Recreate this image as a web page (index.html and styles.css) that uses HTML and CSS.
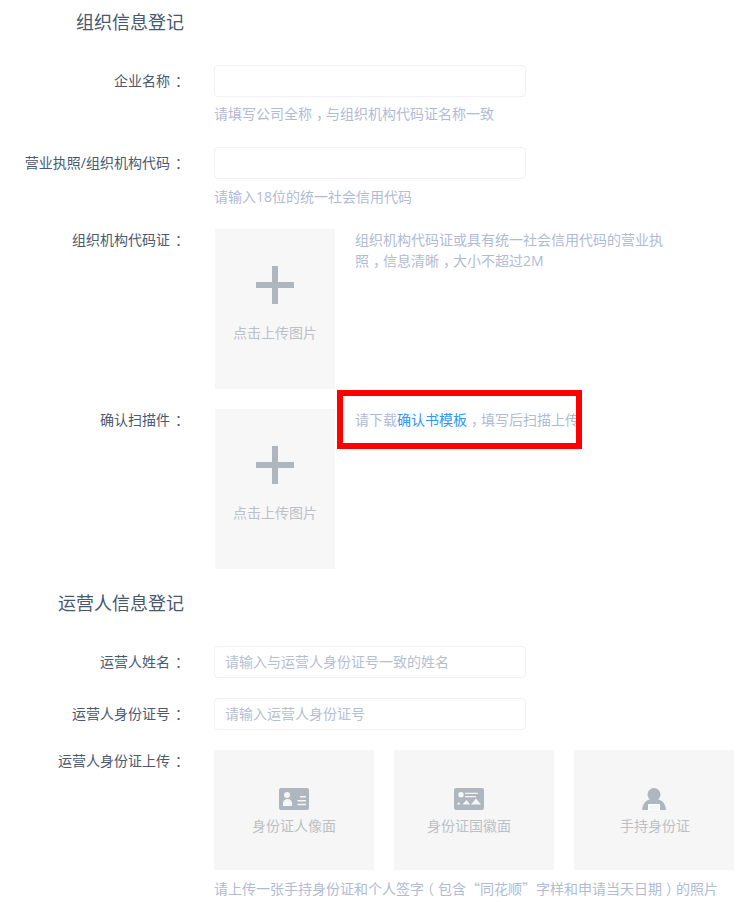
FILE: index.html
```html
<!DOCTYPE html>
<html lang="zh-CN">
<head>
<meta charset="utf-8">
<title>组织信息登记</title>
<link rel="stylesheet" href="styles.css">
</head>
<body>
<main class="form">
  <h2 class="title">组织信息登记</h2>
  <div class="row row-fixed">
    <label class="label">企业名称<span class="colon">：</span></label>
    <div class="field">
      <input class="input" type="text">
      <p class="hint hint-first">请填写公司全称<span class="comma">，</span>与组织机构代码证名称一致</p>
    </div>
  </div>
  <div class="row row-fixed">
    <label class="label">营业执照/组织机构代码<span class="colon">：</span></label>
    <div class="field">
      <input class="input" type="text">
      <p class="hint">请输入18位的统一社会信用代码</p>
    </div>
  </div>
  <div class="row row-upload">
    <label class="label">组织机构代码证<span class="colon">：</span></label>
    <div class="field field-side">
      <div class="upload upload-plus">
        <svg class="plus" width="38" height="38" viewBox="0 0 38 38"><path d="M16 0h6v16h16v6H22v16h-6V22H0v-6h16z"/></svg>
        <span>点击上传图片</span>
      </div>
      <div class="side-text">
        <p class="side-line">组织机构代码证或具有统一社会信用代码的营业执</p>
        <p class="side-line">照<span class="comma">，</span>信息清晰<span class="comma">，</span>大小不超过2M</p>
      </div>
    </div>
  </div>
  <div class="row row-upload">
    <label class="label">确认扫描件<span class="colon">：</span></label>
    <div class="field field-side">
      <div class="upload upload-plus">
        <svg class="plus" width="38" height="38" viewBox="0 0 38 38"><path d="M16 0h6v16h16v6H22v16h-6V22H0v-6h16z"/></svg>
        <span>点击上传图片</span>
      </div>
      <div class="side-text">
        <p class="side-line">请下载<a class="link">确认书模板</a><span class="comma">，</span>填写后扫描上传</p>
      </div>
    </div>
  </div>
  <h2 class="title title-second">运营人信息登记</h2>
  <div class="row row-input">
    <label class="label label-input">运营人姓名<span class="colon">：</span></label>
    <div class="field"><input class="input" type="text" placeholder="请输入与运营人身份证号一致的姓名"></div>
  </div>
  <div class="row row-input">
    <label class="label label-input">运营人身份证号<span class="colon">：</span></label>
    <div class="field"><input class="input" type="text" placeholder="请输入运营人身份证号"></div>
  </div>
  <div class="row">
    <label class="label">运营人身份证上传<span class="colon">：</span></label>
    <div class="field">
      <div class="id-grid">
        <div class="id-card">
          <svg class="id-icon" width="30" height="22" viewBox="0 0 30 22"><path fill-rule="evenodd" d="M2 0h26a2 2 0 0 1 2 2v18a2 2 0 0 1-2 2H2a2 2 0 0 1-2-2V2a2 2 0 0 1 2-2zm6 4a3 3 0 1 0 0 6 3 3 0 0 0 0-6zM4 18h9v-3c0-2.200-2-4-4.500-4S4 12.800 4 15zM21 8v1.500h6V8zm-2.500 4v1.500H27V12zm0 3.800v1.500H27v-1.500z"/></svg>
          <span>身份证人像面</span>
        </div>
        <div class="id-card id-card-shift">
          <svg class="id-icon" width="30" height="22" viewBox="0 0 30 22"><path fill-rule="evenodd" d="M2 0h26a2 2 0 0 1 2 2v18a2 2 0 0 1-2 2H2a2 2 0 0 1-2-2V2a2 2 0 0 1 2-2zm5 4a2.700 2.700 0 1 0 0 5.400A2.700 2.700 0 0 0 7 4zm4 .7V6h13V4.700zM11 8v1.300h11V8zM3 16.500l1.700-2.500 1.700 2.500zm5.500 0L12.500 12l3.700 4.500zm8.500 0l5-6 5 6z"/></svg>
          <span>身份证国徽面</span>
        </div>
        <div class="id-card id-card-last">
          <svg class="id-icon" width="24" height="22" viewBox="0 0 24 22"><circle cx="12" cy="6.500" r="6.500"/><path d="M7 11.500C3 13 .8 16 0 22h24c-.8-6-3-9-7-10.500z"/><path class="id-screen" d="M6.500 16.500h11V22h-11z"/></svg>
          <span>手持身份证</span>
        </div>
      </div>
      <p class="hint">请上传一张手持身份证和个人签<span class="tight">字</span><span class="paren-open">（</span>包含<span class="quote">“</span>同花顺<span class="quote">”</span>字样和申请当天日期<span class="comma">）</span>的照片</p>
    </div>
  </div>
</main>
<div class="highlight"></div>
</body>
</html>
```
FILE: styles.css
```css
* { box-sizing: border-box; }
html, body { margin: 0; padding: 0; background: #fff; }
body {
  width: 742px;
  height: 902px;
  overflow: hidden;
  position: relative;
  font-family: "Open Sans", "Noto Sans CJK SC", "Liberation Sans", sans-serif;
  font-size: 14px;
  color: #4a5a70;
}
.form { display: flex; flex-direction: column; }
.title {
  width: 184px;
  height: 44px;
  margin: 0 0 21px;
  font-size: 18px;
  font-weight: 400;
  line-height: 44px;
  text-align: right;
  white-space: nowrap;
  color: #46586e;
}
.title-second { margin-top: 12px; }
.row { display: flex; align-items: flex-start; }
.row-fixed { height: 82px; }
.row-upload { margin-bottom: 20px; }
.row-upload + .title { margin-top: -8px; }
.row-input { margin-bottom: 20px; }
.label {
  flex: none;
  width: 184px;
  line-height: 21px;
  text-align: right;
  white-space: nowrap;
}
.row-fixed .label { line-height: 30px; }
.label-input { line-height: 30px; }
.colon {
  font-family: "Noto Sans CJK SC", sans-serif;
  padding-left: 5px;
  letter-spacing: -5px;
}
.comma {
  font-family: "Noto Sans CJK SC", sans-serif;
  padding-left: 4px;
  letter-spacing: -4px;
}
.tight { letter-spacing: -4px; }
.paren-open {
  font-family: "Noto Sans CJK SC", sans-serif;
  margin-right: 4px;
}
.quote { font-family: "Noto Sans CJK SC", sans-serif; }
.field { margin-left: 30px; }
.field-side { display: flex; margin-left: 31px; gap: 20px; }
.input {
  display: block;
  width: 312px;
  height: 32px;
  padding: 0 10px 2px;
  border: 1px solid #eff1f7;
  border-radius: 4px;
  background: #fff;
  outline: none;
  font: 14px "Noto Sans CJK SC", "Liberation Sans", sans-serif;
  color: #4a5a70;
}
.input::placeholder { color: #b5bed3; opacity: 1; }
.hint {
  margin: 8px 0 0;
  line-height: 20px;
  color: #b0bbd5;
  white-space: nowrap;
}
.hint-first { margin-top: 6px; }
.upload {
  flex: none;
  display: flex;
  flex-direction: column;
  align-items: center;
  width: 120px;
  height: 160px;
  background: #f7f7f7;
  color: #bcc0c6;
}
.plus { display: block; margin-top: 37px; margin-bottom: 19px; fill: #aeb6bf; }
.upload span { line-height: 20px; }
.side-text {
  width: 310px;
  color: #b0bbd5;
}
.side-line {
  margin: 0;
  line-height: 21px;
  white-space: nowrap;
}
.link { color: #2e96f5; }
.id-grid { display: flex; gap: 20px; }
.id-card {
  display: flex;
  flex-direction: column;
  align-items: center;
  width: 160px;
  height: 120px;
  padding-top: 38px;
  background: #f6f6f6;
  color: #bcc0c6;
}
.id-card-shift { padding-right: 10px; }
.id-card-last span { margin-left: 2px; }
.id-icon { display: block; fill: #aeb6bf; margin-bottom: 6px; }
.id-screen { fill: #f6f6f6; stroke: #fff; stroke-width: 1; }
.id-card span { line-height: 20px; }
.highlight {
  position: absolute;
  left: 337px;
  top: 390px;
  width: 245px;
  height: 59px;
  border: 6px solid #f00;
}
```
